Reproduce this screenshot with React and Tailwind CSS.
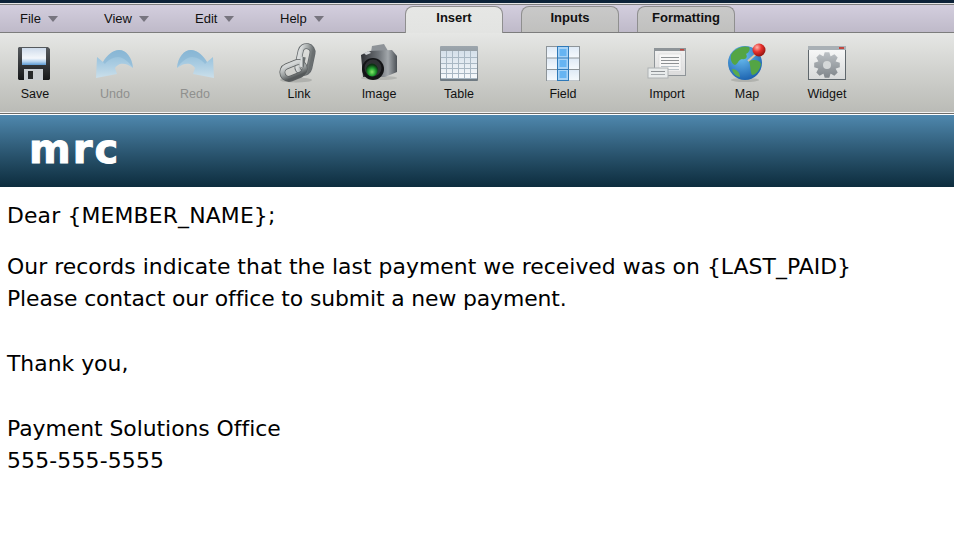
import React from "react";

const Svg = ({ children }) => (
  <svg width="48" height="42" viewBox="0 0 48 42" className="block">{children}</svg>
);

const SaveIcon = () => (
  <Svg>
    <defs>
      <linearGradient id="sv1" x1="0" y1="0" x2="0" y2="1"><stop offset="0" stopColor="#565a5e"/><stop offset="1" stopColor="#16181a"/></linearGradient>
      <linearGradient id="sv2" x1="0" y1="0" x2="0" y2="1"><stop offset="0" stopColor="#cfdcec"/><stop offset="0.6" stopColor="#f4f7fb"/><stop offset="0.8" stopColor="#b5d3ef"/><stop offset="1" stopColor="#5c9ad3"/></linearGradient>
    </defs>
    <path d="M8 5h29l2 2v30l-1 1H8l-1-1V6z" fill="url(#sv1)"/>
    <rect x="11" y="6" width="24" height="17" fill="url(#sv2)"/>
    <path d="M13 27h19v11H13z" fill="#c9ced3"/>
    <rect x="17" y="29" width="5" height="8" fill="#26292c"/>
  </Svg>
);

const UndoShape = ({ id }) => (
  <>
    <defs>
      <linearGradient id={id} x1="0" y1="0" x2="0" y2="1"><stop offset="0" stopColor="#8fbcd8"/><stop offset="0.5" stopColor="#a9cce2"/><stop offset="1" stopColor="#cbdfea"/></linearGradient>
    </defs>
    <path d="M6 15 L12 20 C16 13 22 8 28 8 C35 8 41 15 42 26 C37 22 33 21 29 22 C27 23 25 24 24 26 L26 32 L5 36 Z" fill={`url(#${id})`}/>
    <path d="M12 20 C16 13 22 8 28 8 C35 8 41 15 42 26 C37 19 32 15 27 15 C21 15 16 19 14 22 Z" fill="#7fb0d0" opacity="0.45"/>
  </>
);

const UndoIcon = () => <Svg><UndoShape id="un1"/></Svg>;
const RedoIcon = () => <Svg><g transform="translate(48 0) scale(-1 1)"><UndoShape id="re1"/></g></Svg>;

const LinkIcon = () => (
  <Svg>
    <defs>
      <linearGradient id="lk1" x1="0" y1="0" x2="1" y2="0"><stop offset="0" stopColor="#d9dcdc"/><stop offset="0.5" stopColor="#a4a9a9"/><stop offset="1" stopColor="#6a6f70"/></linearGradient>
      <linearGradient id="lk2" x1="0" y1="0" x2="0" y2="1"><stop offset="0" stopColor="#d4d7d7"/><stop offset="0.55" stopColor="#9ba0a0"/><stop offset="1" stopColor="#55595a"/></linearGradient>
    </defs>
    <ellipse cx="21" cy="38" rx="16" ry="2.5" fill="#7c7d7a" opacity="0.35"/>
    <rect x="24" y="4" width="12" height="27" rx="6" transform="rotate(12 30 17.5)" fill="none" stroke="#62676a" strokeWidth="6"/>
    <rect x="24" y="4" width="12" height="27" rx="6" transform="rotate(12 30 17.5)" fill="none" stroke="url(#lk1)" strokeWidth="4.5"/>
    <rect x="7" y="22" width="23" height="13" rx="6.5" transform="rotate(-22 18.5 28.5)" fill="none" stroke="#5a5e5f" strokeWidth="6"/>
    <rect x="7" y="22" width="23" height="13" rx="6.5" transform="rotate(-22 18.5 28.5)" fill="none" stroke="url(#lk2)" strokeWidth="4.5"/>
    <path d="M26.5 25 L28.5 15" stroke="url(#lk1)" strokeWidth="4.5" fill="none"/>
  </Svg>
);

const ImageIcon = () => (
  <Svg>
    <defs>
      <linearGradient id="cm1" x1="0" y1="0" x2="1" y2="0"><stop offset="0" stopColor="#303236"/><stop offset="0.5" stopColor="#6f7479"/><stop offset="0.75" stopColor="#a3a8ac"/><stop offset="1" stopColor="#4c5156"/></linearGradient>
      <radialGradient id="cm2" cx="0.5" cy="0.65" r="0.55"><stop offset="0" stopColor="#86e86a"/><stop offset="0.55" stopColor="#1f9a2e"/><stop offset="1" stopColor="#0c3413"/></radialGradient>
    </defs>
    <ellipse cx="24" cy="36" rx="18" ry="2" fill="#7c7d7a" opacity="0.3"/>
    <path d="M17 4 L29 2 L33 9 L16 10 Z" fill="#8e9398"/>
    <path d="M6 13 L14 9 L37 8 L42 14 L42 30 L30 35 L8 35 Z" fill="url(#cm1)"/>
    <path d="M9 11 L14 9 L16 11 L11 13 Z" fill="#d2d5d7"/>
    <circle cx="18" cy="27" r="11" fill="#131416"/>
    <circle cx="18" cy="26" r="8.5" fill="#2f3134"/>
    <ellipse cx="17" cy="28" rx="6" ry="6.5" fill="url(#cm2)"/>
  </Svg>
);

const TableIcon = () => {
  const v = [11, 17, 23, 29, 35], h = [15, 21, 26, 31, 36];
  return (
    <Svg>
      <defs>
        <linearGradient id="tb1" x1="0" y1="0" x2="0" y2="1"><stop offset="0" stopColor="#9da6ad"/><stop offset="1" stopColor="#6f7a82"/></linearGradient>
        <linearGradient id="tb2" x1="0" y1="0" x2="0" y2="1"><stop offset="0" stopColor="#d5e0ea"/><stop offset="1" stopColor="#f7fafc"/></linearGradient>
      </defs>
      <rect x="5" y="4" width="38" height="35" rx="1" fill="url(#tb1)"/>
      <rect x="6" y="9" width="36" height="28" fill="url(#tb2)"/>
      {v.map((x) => <rect key={x} x={x} y="9" width="1" height="28" fill="#a9b8c4"/>)}
      {h.map((y) => <rect key={y} x="6" y={y} width="36" height="1" fill="#a9b8c4"/>)}
    </Svg>
  );
};

const FieldIcon = () => (
  <Svg>
    <defs>
      <linearGradient id="fd1" x1="0" y1="0" x2="0" y2="1"><stop offset="0" stopColor="#dfeaf6"/><stop offset="1" stopColor="#f5f9fd"/></linearGradient>
    </defs>
    <rect x="7" y="4" width="34" height="35" fill="#8d9499"/>
    {[5, 16.5, 28].map((y) => [8, 19, 30].map((x) => (
      <rect key={`${x}-${y}`} x={x} y={y} width="10" height="10.5" fill="url(#fd1)"/>
    )))}
    <rect x="18.5" y="4.5" width="11" height="34" fill="#a8d3f6" stroke="#2f79b8" strokeWidth="1"/>
    {[7, 18, 29].map((y) => <rect key={y} x="20.5" y={y} width="7" height="7" fill="#66b4f2"/>)}
    <path d="M18.5 16h11M18.5 27.5h11" stroke="#2f79b8"/>
  </Svg>
);

const ImportIcon = () => (
  <Svg>
    <defs>
      <linearGradient id="im1" x1="0" y1="0" x2="0" y2="1"><stop offset="0" stopColor="#f0f0f0"/><stop offset="1" stopColor="#dcdcdc"/></linearGradient>
    </defs>
    <rect x="11" y="6" width="32" height="28" fill="#8e9498"/>
    <rect x="12" y="9" width="30" height="24" fill="url(#im1)"/>
    <rect x="37" y="7" width="4" height="1.5" fill="#c0473f"/>
    <rect x="16" y="12" width="22" height="17" fill="#f7f7f7" stroke="#d4d4d4" strokeWidth="0.5"/>
    {[15, 18, 21].map((y) => <rect key={y} x="18" y={y} width="18" height="1" fill="#8d9194"/>)}
    {[24, 27].map((y) => <rect key={y} x="18" y={y} width="18" height="1" fill="#b9c2c8"/>)}
    <rect x="5" y="26" width="20" height="10" fill="#e9ecec" stroke="#aeb2b3" strokeWidth="1"/>
    <rect x="8" y="29" width="14" height="1" fill="#8d9194"/>
    <rect x="8" y="32" width="14" height="1" fill="#a6abae"/>
  </Svg>
);

const MapIcon = () => (
  <Svg>
    <defs>
      <radialGradient id="mp1" cx="0.4" cy="0.3" r="0.8"><stop offset="0" stopColor="#6cc0f2"/><stop offset="1" stopColor="#1358a8"/></radialGradient>
      <radialGradient id="mp2" cx="0.35" cy="0.3" r="0.7"><stop offset="0" stopColor="#ffb4ac"/><stop offset="0.5" stopColor="#e8312d"/><stop offset="1" stopColor="#971512"/></radialGradient>
    </defs>
    <ellipse cx="22" cy="38" rx="14" ry="2" fill="#8a8b88" opacity="0.4"/>
    <circle cx="22" cy="21" r="17" fill="url(#mp1)"/>
    <path d="M8 13 C11 7 19 3 26 5 C28 8 25 11 23 12 C25 15 23 18 19 17 C15 18 15 22 12 23 C9 22 7 18 8 13Z" fill="#54a544"/>
    <path d="M26 19 C31 17 37 18 38 22 C37 28 33 33 29 33 C27 29 28 25 26 19Z" fill="#54a544"/>
    <path d="M9 27 C13 27 17 30 17 35 C13 35 10 31 9 27Z" fill="#5cab4a"/>
    <path d="M25 19 L33 12" stroke="#d9c7a8" strokeWidth="2"/>
    <circle cx="36" cy="8" r="6.5" fill="url(#mp2)"/>
  </Svg>
);

const gearPath = (() => {
  const pts = [];
  const n = 8;
  for (let i = 0; i < n; i++) {
    const a = (i / n) * Math.PI * 2;
    const d = Math.PI / n;
    const p = (r, t) => `${(24 + r * Math.cos(t)).toFixed(1)} ${(23 + r * Math.sin(t)).toFixed(1)}`;
    pts.push(p(9.5, a - d * 0.95), p(13, a - d * 0.45), p(13, a + d * 0.45), p(9.5, a + d * 0.95));
  }
  return "M" + pts.join("L") + "Z";
})();

const WidgetIcon = () => (
  <Svg>
    <defs>
      <linearGradient id="wd1" x1="0" y1="0" x2="0" y2="1"><stop offset="0" stopColor="#f6f7f7"/><stop offset="1" stopColor="#d8dada"/></linearGradient>
      <linearGradient id="wd2" x1="0" y1="0" x2="0" y2="1"><stop offset="0" stopColor="#bcc1c5"/><stop offset="1" stopColor="#7f858a"/></linearGradient>
    </defs>
    <rect x="5" y="4" width="38" height="34" fill="#5f676c"/>
    <rect x="5" y="4" width="38" height="4" fill="#a9b0b5"/>
    <rect x="36" y="5" width="5" height="2" fill="#c0473f"/>
    <rect x="6" y="8" width="36" height="29" fill="url(#wd1)"/>
    <path d={gearPath} fill="url(#wd2)"/>
    <circle cx="24" cy="23" r="4" fill="#d5d8d9"/>
  </Svg>
);

const MenuItem = ({ label, width }) => (
  <div className={`flex items-center gap-[7px] ${width}`}>
    <span className="text-[13px] text-[#111]">{label}</span>
    <span className="w-0 h-0 border-x-[5.5px] border-x-transparent border-t-[6px] border-t-[#77757f]" />
  </div>
);

const Tab = ({ label, active }) => (
  <div
    className={
      active
        ? "w-[98px] h-[27px] -mb-px z-10 rounded-t-lg border border-b-0 border-[#8f8f8f] bg-linear-to-b from-[#e6e7e5] to-[#e3e4e2] text-center text-[13px] font-bold text-[#111] pt-[1px]"
        : "w-[98px] h-[26px] rounded-t-lg border border-b-0 border-[#8f8f8f] bg-linear-to-b from-[#c9c9c9] to-[#c0c0be] text-center text-[13px] font-bold text-[#111] pt-[1px]"
    }
  >
    {label}
  </div>
);

const Tool = ({ icon, label, disabled }) => (
  <div className="w-[70px] flex flex-col items-center">
    {icon}
    <span className={`mt-[3px] text-[12.5px] leading-[14px] ${disabled ? "text-[#8f908e]" : "text-[#111]"}`}>{label}</span>
  </div>
);

export default function App() {
  return (
    <div className="w-[954px] h-[536px] overflow-hidden bg-white font-['Liberation_Sans',Arial,sans-serif]">
      <div className="h-[3px] bg-[#0c2238]" />
      <div className="h-[1px] bg-[#e6e6e6]" />
      <div className="h-[1px] bg-[#7f7f7f]" />
      <div className="h-[27px] flex items-stretch border-b border-[#7d7d7d] bg-linear-to-b from-[#d3cede] to-[#bfbac9] box-content pl-[20px]">
        <MenuItem label="File" width="w-[84px]" />
        <MenuItem label="View" width="w-[91px]" />
        <MenuItem label="Edit" width="w-[85px]" />
        <MenuItem label="Help" width="w-[125px]" />
        <div className="flex items-end gap-[18px] self-end">
          <Tab label="Insert" active />
          <Tab label="Inputs" />
          <Tab label="Formatting" />
        </div>
      </div>
      <div className="h-[79px] flex items-start pt-[9px] bg-linear-to-b from-[#e6e7e5] to-[#babbb6]">
        <div className="flex gap-[10px]">
          <Tool icon={<SaveIcon />} label="Save" />
          <Tool icon={<UndoIcon />} label="Undo" disabled />
          <Tool icon={<RedoIcon />} label="Redo" disabled />
        </div>
        <div className="flex gap-[10px] ml-[34px]">
          <Tool icon={<LinkIcon />} label="Link" />
          <Tool icon={<ImageIcon />} label="Image" />
          <Tool icon={<TableIcon />} label="Table" />
        </div>
        <div className="ml-[34px]">
          <Tool icon={<FieldIcon />} label="Field" />
        </div>
        <div className="flex gap-[10px] ml-[34px]">
          <Tool icon={<ImportIcon />} label="Import" />
          <Tool icon={<MapIcon />} label="Map" />
          <Tool icon={<WidgetIcon />} label="Widget" />
        </div>
      </div>
      <div className="h-[1px] bg-[#f2f2f2]" />
      <div className="h-[1px] bg-[#6d6d6a]" />
      <div className="h-[1px] bg-white" />
      <div className="h-[72px] flex items-center pl-[29px] bg-linear-to-b from-[#4f88ae] to-[#0d2d3e]">
        <span className="text-[40px] leading-none font-bold text-white font-['DejaVu_Sans',sans-serif] -mt-[4px] tracking-[2px] [-webkit-text-stroke:1px_#fff]">mrc</span>
      </div>
      <div className="pl-[7px] pt-[13px] text-[21.9px] leading-[32.4px] text-black font-['DejaVu_Sans',Verdana,sans-serif]">
        <p className="mb-[18.6px] tracking-[0.15px]">Dear {"{MEMBER_NAME}"};</p>
        <p className="tracking-[0.03px]">Our records indicate that the last payment we received was on {"{LAST_PAID}"}</p>
        <p className="tracking-[-0.12px]">Please contact our office to submit a new payment.</p>
        <p>&nbsp;</p>
        <p>Thank you,</p>
        <p>&nbsp;</p>
        <p className="tracking-[-0.04px]">Payment Solutions Office</p>
        <p className="tracking-[0.17px]">555-555-5555</p>
      </div>
    </div>
  );
}
